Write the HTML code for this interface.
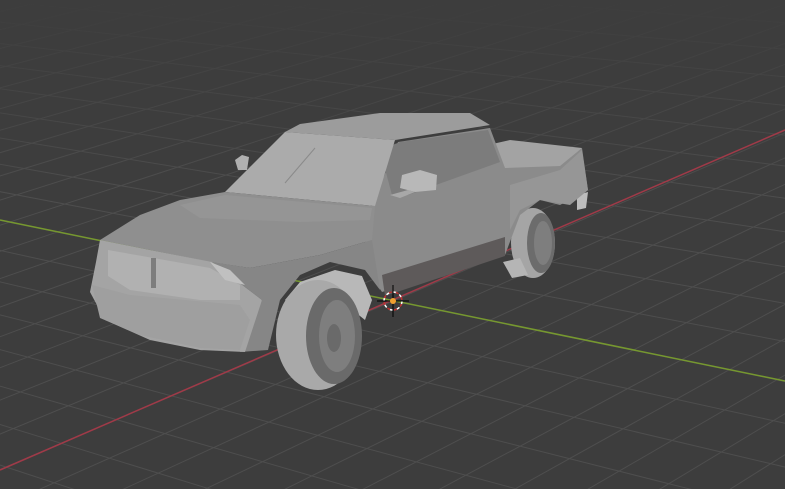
<!DOCTYPE html>
<html><head><style>html,body{margin:0;padding:0;background:#3d3d3d;overflow:hidden;width:785px;height:489px}#w{position:relative;width:785px;height:489px;overflow:hidden}svg{display:block;position:absolute;left:0;top:0}</style></head>
<body><div id="w">
<svg id="s" width="785" height="489" viewBox="0 0 785 489" xmlns="http://www.w3.org/2000/svg" style="overflow:hidden">
<defs><linearGradient id="fade" x1="0" y1="0" x2="0" y2="1"><stop offset="0" stop-color="#3d3d3d" stop-opacity="1"/><stop offset="0.15" stop-color="#3d3d3d" stop-opacity="0.6"/><stop offset="0.4" stop-color="#3d3d3d" stop-opacity="0"/></linearGradient>
<clipPath id="c"><rect width="785" height="489"/></clipPath></defs>
<rect width="785" height="489" fill="#3d3d3d"/>
<g id="grid" stroke="#4e4e4e" stroke-width="1" clip-path="url(#c)"></g>
<rect width="785" height="489" fill="url(#fade)"/>
<line x1="0" y1="470" x2="785" y2="130" stroke="#a03a48" stroke-width="1.5"/>
<line x1="0" y1="220" x2="785" y2="381" stroke="#76982f" stroke-width="1.5"/>
<g stroke-linejoin="round">
<ellipse cx="533" cy="243" rx="22" ry="35" fill="#a5a5a5"/>
<ellipse cx="541" cy="243" rx="14" ry="30" fill="#6c6c6c"/>
<ellipse cx="543" cy="243" rx="9" ry="22" fill="#7e7e7e"/>
<polygon points="503,262 520,258 528,275 512,278" fill="#b5b5b5"/>
<polygon points="577,195 588,192 586,208 577,210" fill="#bdbdbd"/>
<polygon points="488,145 510,140 582,148 560,168 500,168" fill="#a3a3a3"/>
<polygon points="372,205 398,142 490,128 505,168 560,166 582,148 588,190 560,205 540,200 520,215 505,255 382,292 362,262" fill="#8b8b8b"/>
<polygon points="380,150 400,142 488,130 500,162 408,195 392,195" fill="#7c7c7c"/>
<polygon points="382,275 505,237 505,256 385,296" fill="#5e5a5a"/>
<polygon points="510,185 560,170 582,150 588,190 570,205 540,200 520,210 510,230" fill="#969696"/>
<polygon points="402,175 420,170 437,175 436,190 415,192 400,188" fill="#b8b8b8"/>
<polygon points="390,195 408,190 415,192 400,198" fill="#a8a8a8"/>
<polygon points="235,160 242,155 249,157 247,170 238,170" fill="#b0b0b0"/>
<polygon points="285,132 300,124 380,113 470,113 490,125 395,140" fill="#9c9c9c"/>
<polygon points="225,192 285,132 395,140 375,206" fill="#ababab"/>
<line x1="285" y1="183" x2="315" y2="148" stroke="#8a8a8a" stroke-width="1"/>
<polygon points="100,240 140,215 180,200 225,192 375,206 372,240 320,255 250,268 210,262 150,250" fill="#8f8f8f"/>
<polygon points="180,205 225,195 372,208 370,220 300,222 200,218" fill="#959595"/>
<polygon points="212,262 250,268 320,255 372,240 380,290 365,270 330,262 300,275 280,300 268,350 240,352 262,300" fill="#868686"/>
<polygon points="100,240 150,250 212,262 262,300 245,352 200,350 150,340 105,320 90,292 96,262" fill="#a4a4a4"/>
<polygon points="108,250 210,268 240,285 240,300 200,300 130,290 108,276" fill="#b1b1b1"/>
<polygon points="92,285 130,295 240,305 250,320 240,350 200,348 140,335 100,318" fill="#9f9f9f"/>
<rect x="151" y="258" width="5" height="30" fill="#7d7d7d"/>
<polygon points="210,262 230,270 245,285 225,280" fill="#c0c0c0"/>
<polygon points="285,300 300,282 335,270 362,276 372,300 365,320 340,300 300,310" fill="#b8b8b8"/>
<ellipse cx="318" cy="335" rx="42" ry="55" fill="#a9a9a9"/>
<ellipse cx="334" cy="336" rx="28" ry="48" fill="#6a6a6a"/>
<ellipse cx="337" cy="336" rx="18" ry="36" fill="#7e7e7e"/>
<ellipse cx="334" cy="338" rx="7" ry="14" fill="#6a6a6a"/>
</g>
<g>
<circle cx="393" cy="301" r="9" fill="none" stroke="#fff" stroke-width="1.5" stroke-dasharray="4 3"/>
<circle cx="393" cy="301" r="9" fill="none" stroke="#c03030" stroke-width="1.5" stroke-dasharray="3 4" stroke-dashoffset="4"/>
<line x1="393" y1="285" x2="393" y2="317" stroke="#000" stroke-width="1"/>
<line x1="377" y1="301" x2="409" y2="301" stroke="#000" stroke-width="1"/>
<circle cx="393" cy="301" r="3" fill="#f0a030"/>
</g>
<script>
(function(){
var g=document.getElementById('grid');var ns='http://www.w3.org/2000/svg';
function ln(x1,y1,x2,y2){var l=document.createElementNS(ns,'line');l.setAttribute('x1',x1);l.setAttribute('y1',y1);l.setAttribute('x2',x2);l.setAttribute('y2',y2);g.appendChild(l);}
var VR=[2400,-560],VG=[-2000,-190];
for(var i=-30;i<=40;i++){var x=393+i*48;var y=301+0.205*(x-393);
 var dx=x-VR[0],dy=y-VR[1];ln(VR[0]+dx*0.35,VR[1]+dy*0.35,VR[0]+dx*3,VR[1]+dy*3);}
for(var j=-40;j<=30;j++){var x=393+j*55;var y=301-0.433*(x-393);
 var dx=x-VG[0],dy=y-VG[1];ln(VG[0]+dx*0.45,VG[1]+dy*0.45,VG[0]+dx*3,VG[1]+dy*3);}
})();
</script>
</svg>
</div></body></html>
